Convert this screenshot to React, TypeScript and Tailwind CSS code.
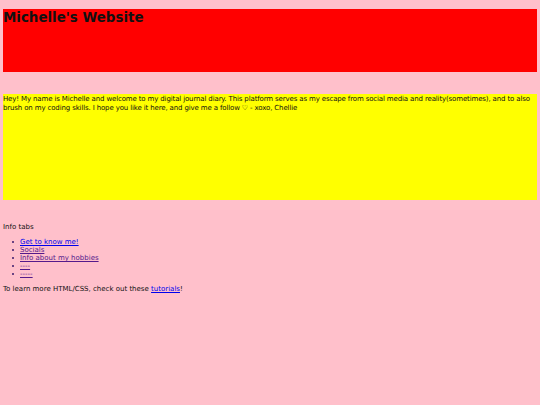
const tabs = [
  { label: "Get to know me!", visited: false },
  { label: "Socials", visited: true },
  { label: "Info about my hobbies", visited: true },
  { label: "----", visited: true },
  { label: "-----", visited: true },
];

export default function App() {
  return (
    <div className="min-h-[405px] bg-[#ffc0cb] px-[3px] pt-[9px] pb-4 font-['DejaVu_Sans',sans-serif] text-[7px] leading-[8px] text-[#111]">
      <header className="h-[63px] bg-[#ff0000]">
        <h1 className="text-[13.4px] font-bold leading-[17px]">Michelle's Website</h1>
      </header>

      <section className="mt-[22px] h-[106px] bg-[#ffff00] pt-[1px]">
        <p className="leading-[8.5px] tracking-[-0.14px]">
          Hey! My name is Michelle and welcome to my digital journal diary. This platform serves as my escape from
          social media and reality(sometimes), and to also brush on my coding skills. I hope you like it here, and give
          me a follow ♡ - xoxo, Chellie
        </p>
      </section>

      <section className="mt-[23px]">
        <p>Info tabs</p>
        <ul className="mt-[7px] pl-[9px]">
          {tabs.map((t) => (
            <li key={t.label} className="flex items-center gap-[6px]">
              <span className="h-[2px] w-[2px] shrink-0 rounded-full bg-[#3a1a6b]" />
              <a href="#" className={`underline ${t.visited ? "text-[#551a8b]" : "text-[#0000ee]"}`}>
                {t.label}
              </a>
            </li>
          ))}
        </ul>
        <p className="mt-[7px]">
          To learn more HTML/CSS, check out these{" "}
          <a href="#" className="text-[#0000ee] underline">tutorials</a>!
        </p>
      </section>
    </div>
  );
}
